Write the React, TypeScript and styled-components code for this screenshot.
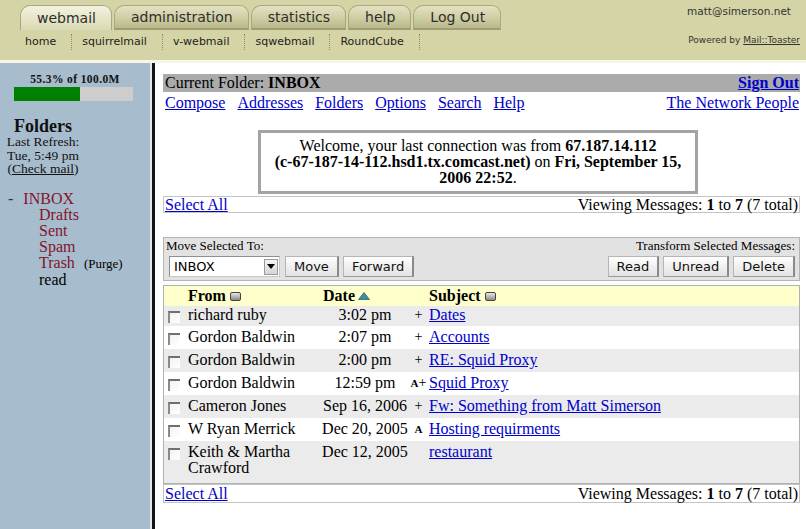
import React from "react";
import styled, { createGlobalStyle } from "styled-components";

const GlobalStyle = createGlobalStyle`
    html, body {
        margin: 0;
        padding: 0;
        height: 100%;
    }
    body {
        font-family: "Liberation Serif", "Times New Roman", serif;
        font-size: 16px;
        color: #000;
        background: #fff;
    }
    #root {
        height: 100%;
    }
`;

const Page = styled.div`
    display: flex;
    flex-direction: column;
    height: 100%;
    overflow: hidden;
`;

/* ---------- top bar ---------- */
const TopBar = styled.header`
    height: 63px;
    box-sizing: border-box;
    flex-shrink: 0;
    display: flex;
    justify-content: space-between;
    background: #d5d4a6;
    border-bottom: 3px solid #f8f7e7;
    padding: 5px 6px 0 20px;
`;
const TabArea = styled.div`
    display: flex;
    flex-direction: column;
`;
const Tabs = styled.nav`
    display: flex;
    gap: 2px;
    height: 25px;
`;
const Tab = styled.a<{ $active?: boolean }>`
    display: flex;
    align-items: center;
    box-sizing: border-box;
    height: 25px;
    padding: 0 15px 0 16px;
    font-family: "DejaVu Sans", Verdana, sans-serif;
    font-size: 14px;
    color: #2e2e2e;
    text-decoration: none;
    border: 1px solid #aaa87c;
    border-bottom: ${(p) => (p.$active ? "none" : "2px solid #9f9d72")};
    border-radius: 10px 9px 0 0;
    background: ${(p) =>
        p.$active
            ? "linear-gradient(#f3f2e0, #e4e3c4 60%, #dad9b4)"
            : "linear-gradient(#e4e2c2, #cfcda3 55%, #b9b78b)"};
`;
const SubNav = styled.nav`
    display: flex;
    align-items: center;
    margin-top: 4px;
    height: 16px;
`;
const SubLink = styled.a`
    font-family: "DejaVu Sans", Verdana, sans-serif;
    font-size: 11px;
    line-height: 16px;
    color: #222;
    text-decoration: none;
    padding: 0 15px 0 10px;
    border-right: 1px dotted #8d8b66;
    &:first-child {
        padding-left: 5px;
    }
`;
const UserArea = styled.div`
    display: flex;
    flex-direction: column;
    align-items: flex-end;
    font-family: "DejaVu Sans", Verdana, sans-serif;
    color: #333;
`;
const UserEmail = styled.div`
    font-size: 10.5px;
    line-height: 13px;
    margin: 0 9px 0 0;
`;
const Powered = styled.div`
    font-size: 9px;
    margin-top: 17px;
    a {
        color: #333;
    }
`;

/* ---------- sidebar ---------- */
const Body = styled.div`
    display: flex;
    flex: 1;
    min-height: 0;
`;
const Sidebar = styled.aside`
    width: 150px;
    flex-shrink: 0;
    background: #a7bccd;
    color: #111;
`;
const Divider = styled.div`
    width: 3px;
    flex-shrink: 0;
    border-left: 2px solid #e2e8ee;
    background: #151515;
`;
const Quota = styled.div`
    margin-top: 10px;
    text-align: center;
    font-size: 11.5px;
    font-weight: bold;
    letter-spacing: 0.4px;
    line-height: 13px;
`;
const QuotaBar = styled.div`
    margin: 1px 0 0 14px;
    width: 119px;
    height: 14px;
    background: #cdcdcd;
`;
const QuotaFill = styled.div`
    height: 100%;
    background: #008000;
`;
const FolderHead = styled.div`
    width: 86px;
    margin-top: 16px;
    text-align: center;
    font-size: 13.5px;
    line-height: 13.5px;
    a {
        color: #111;
    }
`;
const FolderTitle = styled.div`
    font-size: 18px;
    font-weight: bold;
    line-height: 18px;
`;
const FolderList = styled.ul`
    list-style: none;
    margin: 15px 0 0;
    padding: 0 0 0 8px;
    font-size: 16px;
    line-height: 16px;
`;
const FolderItem = styled.li<{ $sub?: boolean; $read?: boolean }>`
    padding-left: ${(p) => (p.$sub ? "31px" : "0")};
    color: ${(p) => (p.$read ? "#000" : "#84142c")};
`;
const Dash = styled.span`
    color: #333;
    margin-right: 10px;
`;
const Purge = styled.span`
    font-size: 13px;
    color: #000;
    margin-left: 9px;
`;

/* ---------- main ---------- */
const Main = styled.main`
    flex: 1;
    min-width: 0;
    padding: 11px 6px 0 8px;
    a {
        color: #0000cc;
    }
`;
const FolderBar = styled.div`
    display: flex;
    justify-content: space-between;
    height: 18px;
    line-height: 18px;
    padding: 0 1px 0 2px;
    background: #ababab;
`;
const NavRow = styled.div`
    display: flex;
    justify-content: space-between;
    margin-top: 2px;
    height: 18px;
    line-height: 18px;
    padding: 0 1px 0 2px;
`;
const NavLinks = styled.div`
    display: flex;
    gap: 12px;
`;
const Welcome = styled.div`
    width: 440px;
    box-sizing: border-box;
    margin: 18px 0 2px 95px;
    padding: 5px 8px;
    border: 3px solid #a3a3a3;
    text-align: center;
    line-height: 16px;
`;
const NoWrap = styled.b`
    white-space: nowrap;
`;
const PagerRow = styled.div<{ $tall?: boolean }>`
    display: flex;
    justify-content: space-between;
    border: 1px solid #c4c4c4;
    line-height: ${(p) => (p.$tall ? "17px" : "15px")};
    padding: 0 1px 0 1px;
`;
const MoveBox = styled.div`
    display: flex;
    justify-content: space-between;
    margin-top: 24px;
    padding: 0 4px 3px 2px;
    background: #e2e2e2;
    border: 1px solid #b4b4b4;
`;
const MoveGroup = styled.div<{ $right?: boolean }>`
    display: flex;
    flex-direction: column;
    align-items: ${(p) => (p.$right ? "flex-end" : "flex-start")};
`;
const GroupLabel = styled.div`
    font-size: 13px;
    line-height: 15px;
    margin-bottom: 3px;
`;
const Controls = styled.div<{ $indent?: boolean }>`
    display: flex;
    gap: 4px;
    margin-left: ${(p) => (p.$indent ? "3px" : "0")};
`;
const SelectBox = styled.div`
    display: flex;
    align-items: center;
    justify-content: space-between;
    width: 111px;
    height: 21px;
    box-sizing: border-box;
    padding: 0 1px 0 4px;
    margin-right: 1px;
    background: #fff;
    border: 1px solid #8f8f8f;
    border-right-color: #c8c8c8;
    border-bottom-color: #c8c8c8;
    font-family: "DejaVu Sans", Verdana, sans-serif;
    font-size: 13px;
`;
const SelectArrow = styled.span`
    width: 14px;
    height: 16px;
    display: flex;
    align-items: center;
    justify-content: center;
    background: linear-gradient(#f6f6f6, #d4d4d4);
    border: 1px solid #9a9a9a;
    box-sizing: border-box;
    &::after {
        content: "";
        border-left: 4px solid transparent;
        border-right: 4px solid transparent;
        border-top: 5px solid #000;
    }
`;
const Button = styled.button`
    height: 21px;
    padding: 0 8px;
    font-family: "DejaVu Sans", Verdana, sans-serif;
    font-size: 13px;
    color: #111;
    background: linear-gradient(#ffffff, #f0f0f0 50%, #e2e2e2);
    border: 1px solid #b5b5b5;
    border-right: 2px solid #8a8a8a;
    border-bottom-color: #9a9a9a;
    border-radius: 0;
`;

const MsgTable = styled.div`
    margin-top: 4px;
    border: 1px solid #b0b0b0;
`;
const MsgRow = styled.div<{ $head?: boolean; $shade?: boolean }>`
    display: grid;
    grid-template-columns: 24px 133px 88px 19px 1fr;
    align-items: ${(p) => (p.$head ? "center" : "start")};
    min-height: ${(p) => (p.$head ? "20px" : "23px")};
    line-height: 16px;
    padding: ${(p) => (p.$head ? "0" : "3px 0 4px")};
    box-sizing: border-box;
    background: ${(p) => (p.$head ? "#ffffcc" : p.$shade ? "#ebebeb" : "#ffffff")};
    font-weight: ${(p) => (p.$head ? "bold" : "normal")};
    &:nth-child(2) {
        min-height: 20px;
        padding-top: 1px;
        padding-bottom: 3px;
    }
    &:last-child {
        padding-bottom: 7px;
    }
`;
const Cell = styled.div<{ $align?: string; $pad?: number }>`
    min-height: 16px;
    padding-left: ${(p) => p.$pad || 0}px;
    display: flex;
    align-items: center;
    justify-content: ${(p) => (p.$align === "center" ? "center" : "flex-start")};
`;
const Check = styled.span`
    width: 12px;
    height: 12px;
    margin: 3px 0 0 4px;
    box-sizing: border-box;
    border-top: 2px solid #6f6f6f;
    border-left: 2px solid #8a8a8a;
    background: linear-gradient(135deg, #f2f2f2, #ffffff);
`;
const SortBox = styled.span`
    display: inline-block;
    width: 11px;
    height: 9px;
    margin-left: 4px;
    box-sizing: border-box;
    border: 1px solid #444;
    border-radius: 2px;
    background: linear-gradient(#e6e6e6, #8c8c8c);
`;
const Flag = styled.span`
    font-size: 14px;
    b {
        font-size: 11px;
        font-weight: bold;
    }
`;
const Subject = styled.span`
    padding-left: 1px;
`;

interface IMessage {
    from: string;
    date: string;
    flag: string;
    subject: string;
}

const messages: IMessage[] = [
    { from: "richard ruby", date: "3:02 pm", flag: "+", subject: "Dates" },
    { from: "Gordon Baldwin", date: "2:07 pm", flag: "+", subject: "Accounts" },
    { from: "Gordon Baldwin", date: "2:00 pm", flag: "+", subject: "RE: Squid Proxy" },
    { from: "Gordon Baldwin", date: "12:59 pm", flag: "A+", subject: "Squid Proxy" },
    { from: "Cameron Jones", date: "Sep 16, 2006", flag: "+", subject: "Fw: Something from Matt Simerson" },
    { from: "W Ryan Merrick", date: "Dec 20, 2005", flag: "A", subject: "Hosting requirments" },
    { from: "Keith & Martha Crawford", date: "Dec 12, 2005", flag: "", subject: "restaurant" },
];

const renderFlag = (flag: string) => (
    <Flag>
        {flag.includes("A") && <b>A</b>}
        {flag.includes("+") && "+"}
    </Flag>
);

const SortUp = () => (
    <svg width="12" height="8" viewBox="0 0 12 8" style={{ marginLeft: 3 }}>
        <polygon points="6,0.5 11.5,7.5 0.5,7.5" fill="#3f8a9c" stroke="#2b6675" strokeWidth="0.8" />
    </svg>
);

const folders = ["Drafts", "Sent", "Spam"];

function App() {
    return (
        <Page>
            <GlobalStyle />
            <TopBar>
                <TabArea>
                    <Tabs>
                        <Tab $active>webmail</Tab>
                        <Tab>administration</Tab>
                        <Tab>statistics</Tab>
                        <Tab>help</Tab>
                        <Tab>Log Out</Tab>
                    </Tabs>
                    <SubNav>
                        <SubLink>home</SubLink>
                        <SubLink>squirrelmail</SubLink>
                        <SubLink>v-webmail</SubLink>
                        <SubLink>sqwebmail</SubLink>
                        <SubLink>RoundCube</SubLink>
                    </SubNav>
                </TabArea>
                <UserArea>
                    <UserEmail>matt@simerson.net</UserEmail>
                    <Powered>
                        Powered by <a href="#">Mail::Toaster</a>
                    </Powered>
                </UserArea>
            </TopBar>

            <Body>
                <Sidebar>
                    <Quota>55.3% of 100.0M</Quota>
                    <QuotaBar>
                        <QuotaFill style={{ width: "55.3%" }} />
                    </QuotaBar>
                    <FolderHead>
                        <FolderTitle>Folders</FolderTitle>
                        Last Refresh:
                        <br />
                        Tue, 5:49 pm
                        <br />
                        (<a href="#">Check mail</a>)
                    </FolderHead>
                    <FolderList>
                        <FolderItem>
                            <Dash>-</Dash>INBOX
                        </FolderItem>
                        {folders.map((f) => (
                            <FolderItem $sub key={f}>
                                {f}
                            </FolderItem>
                        ))}
                        <FolderItem $sub>
                            Trash<Purge>(Purge)</Purge>
                        </FolderItem>
                        <FolderItem $sub $read>
                            read
                        </FolderItem>
                    </FolderList>
                </Sidebar>
                <Divider />

                <Main>
                    <FolderBar>
                        <span>
                            Current Folder: <b>INBOX</b>
                        </span>
                        <a href="#">
                            <b>Sign Out</b>
                        </a>
                    </FolderBar>
                    <NavRow>
                        <NavLinks>
                            <a href="#">Compose</a>
                            <a href="#">Addresses</a>
                            <a href="#">Folders</a>
                            <a href="#">Options</a>
                            <a href="#">Search</a>
                            <a href="#">Help</a>
                        </NavLinks>
                        <a href="#">The Network People</a>
                    </NavRow>
                    <Welcome>
                        Welcome, your last connection was from <b>67.187.14.112</b>{" "}
                        <NoWrap>(c-67-187-14-112.hsd1.tx.comcast.net)</NoWrap> on{" "}
                        <b>Fri, September 15, 2006 22:52</b>.
                    </Welcome>
                    <PagerRow>
                        <a href="#">Select All</a>
                        <span>
                            Viewing Messages: <b>1</b> to <b>7</b> (7 total)
                        </span>
                    </PagerRow>

                    <MoveBox>
                        <MoveGroup>
                            <GroupLabel>Move Selected To:</GroupLabel>
                            <Controls $indent>
                                <SelectBox>
                                    INBOX
                                    <SelectArrow />
                                </SelectBox>
                                <Button>Move</Button>
                                <Button>Forward</Button>
                            </Controls>
                        </MoveGroup>
                        <MoveGroup $right>
                            <GroupLabel>Transform Selected Messages:</GroupLabel>
                            <Controls>
                                <Button>Read</Button>
                                <Button>Unread</Button>
                                <Button>Delete</Button>
                            </Controls>
                        </MoveGroup>
                    </MoveBox>

                    <MsgTable>
                        <MsgRow $head>
                            <Cell />
                            <Cell>
                                From
                                <SortBox />
                            </Cell>
                            <Cell $pad={2}>
                                Date
                                <SortUp />
                            </Cell>
                            <Cell />
                            <Cell $pad={1}>
                                Subject
                                <SortBox />
                            </Cell>
                        </MsgRow>
                        {messages.map((m, i) => (
                            <MsgRow key={i} $shade={i % 2 === 0}>
                                <Cell>
                                    <Check />
                                </Cell>
                                <Cell>{m.from}</Cell>
                                <Cell $align="center">{m.date}</Cell>
                                <Cell $align="center">{renderFlag(m.flag)}</Cell>
                                <Subject>
                                    <a href="#">{m.subject}</a>
                                </Subject>
                            </MsgRow>
                        ))}
                    </MsgTable>
                    <PagerRow $tall>
                        <a href="#">Select All</a>
                        <span>
                            Viewing Messages: <b>1</b> to <b>7</b> (7 total)
                        </span>
                    </PagerRow>
                </Main>
            </Body>
        </Page>
    );
}

export default App;
